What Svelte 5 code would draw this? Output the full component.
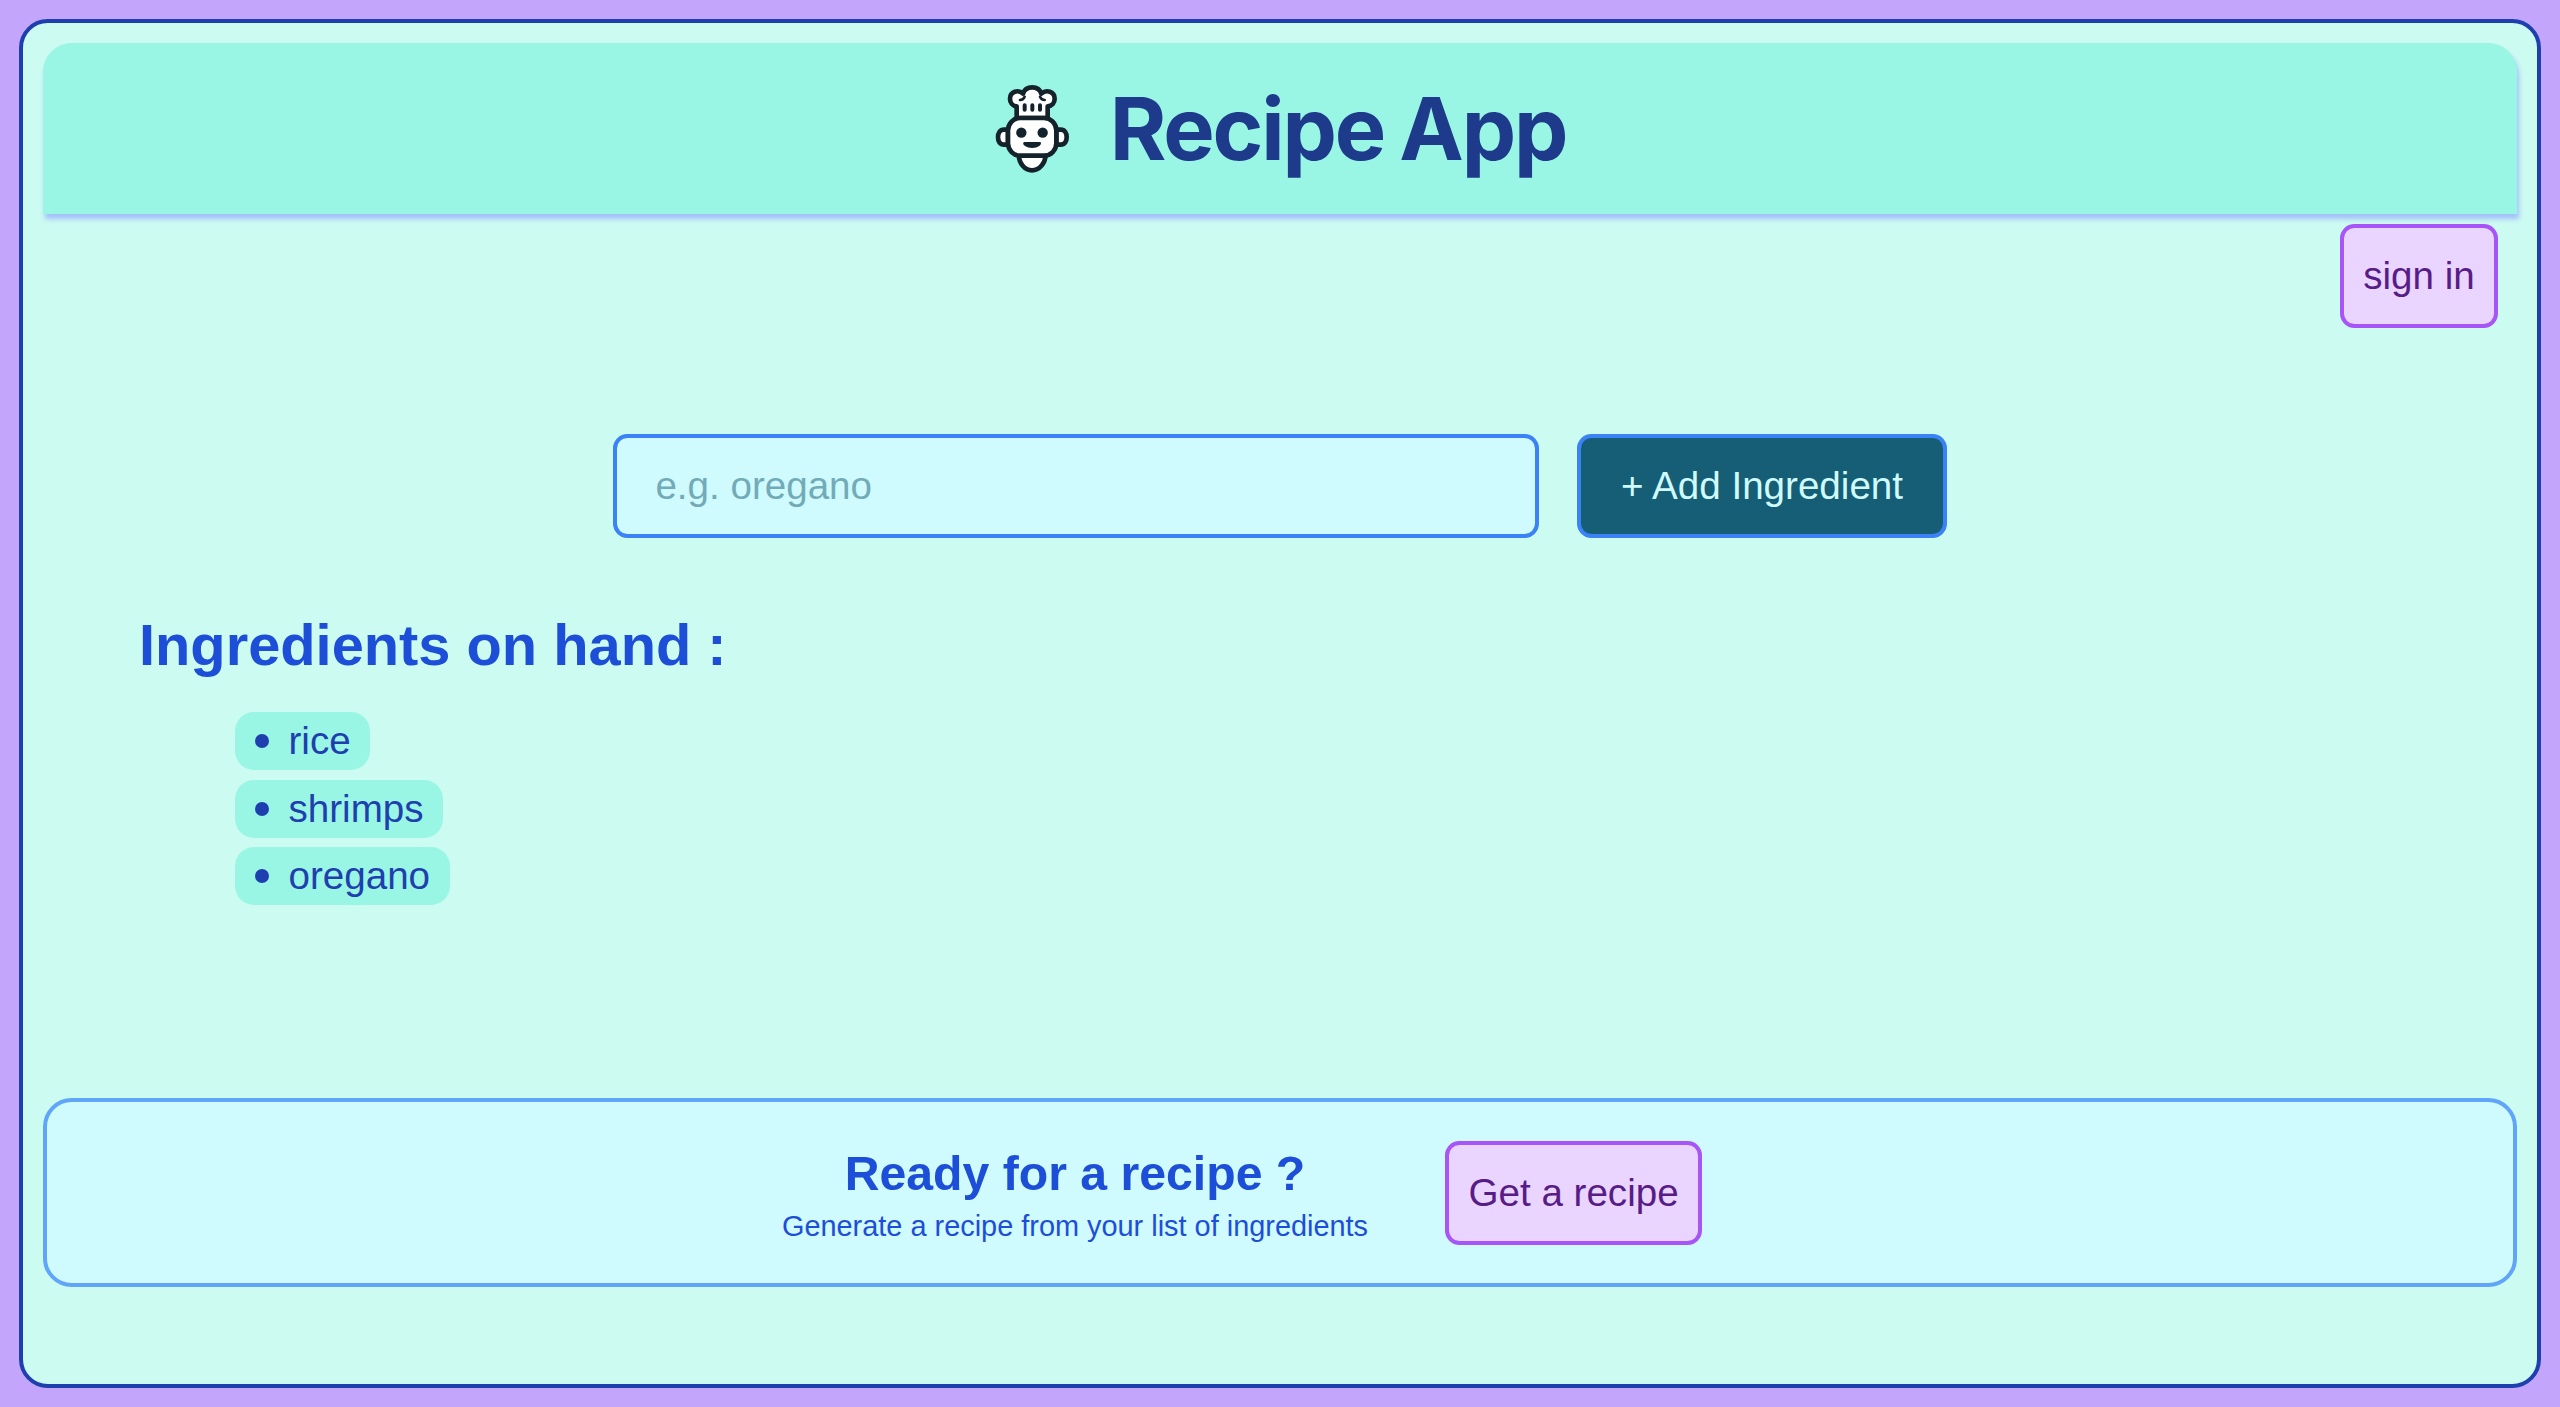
<script>
  const ingredients = ['rice', 'shrimps', 'oregano'];
</script>

<main class="app">
  <header>
    <svg class="logo" viewBox="0 0 330 345" fill="#fff" stroke="#14222b" stroke-width="14" stroke-linejoin="round" stroke-linecap="round">
      <path d="M116 251C117 277 134 298 156 298C178 298 196 277 197 251Z" />
      <path d="M84 176H72C60 176 54 186 54 199C54 212 60 221 72 221H84ZM229 176H242C254 176 260 186 260 199C260 212 254 221 242 221H229Z" />
      <path d="M110 141V106C97 105 90 95 90 83C90 62 115 54 129 68C137 43 176 43 184 68C199 54 224 62 224 83C224 95 216 105 203 106V141Z" />
      <rect x="84" y="141" width="145" height="113" rx="37" />
      <path d="M134 103V116M157 103V116M180 103V116" stroke-width="12" />
      <path d="M120 87C127 87 132 83 134 77M194 87C187 87 182 83 180 77" fill="none" stroke-width="8" />
      <g fill="#14222b" stroke="none">
        <circle cx="124" cy="185" r="15.5" />
        <circle cx="188" cy="185" r="15.5" />
        <path d="M134 213H179C185 213 184 220 178 225C167 233 146 233 135 225C128 220 128 213 134 213Z" />
      </g>
    </svg>
    <h1>Recipe App</h1>
  </header>

  <nav><button class="purple">sign in</button></nav>

  <form onsubmit={(e) => e.preventDefault()}>
    <input type="text" placeholder="e.g. oregano" aria-label="Ingredient" />
    <button class="add">+ Add Ingredient</button>
  </form>

  <section class="list">
    <h2>Ingredients on hand :</h2>
    <ul>
      {#each ingredients as item}
        <li><span class="dot"></span>{item}</li>
      {/each}
    </ul>
  </section>

  <section class="ready">
    <div class="copy">
      <h3>Ready for a recipe ?</h3>
      <p>Generate a recipe from your list of ingredients</p>
    </div>
    <button class="purple">Get a recipe</button>
  </section>
</main>

<style>
  :global(body) {
    margin: 0;
    background: #c4a5fc;
  }
  .app, .app * { box-sizing: border-box; }
  .app {
    display: flex;
    flex-direction: column;
    height: 1369px;
    margin: 19px;
    padding: 20px;
    border: 4px solid #1e40af;
    border-radius: 28.8px;
    background: #ccfbf1;
    font-family: "Liberation Sans", Arial, sans-serif;
    font-size: 38.6px;
    line-height: 58px;
  }
  h1, h2, h3, p, ul { margin: 0; padding: 0; }
  button, input {
    height: 104px;
    margin: 0;
    border: 4px solid #3b82f6;
    border-radius: 14.4px;
    font: inherit;
    white-space: nowrap;
  }
  header {
    display: flex;
    flex: none;
    align-items: center;
    justify-content: center;
    gap: 20px;
    height: 171px;
    padding-right: 14px;
    border-radius: 28.8px 28.8px 0 0;
    background: #99f6e4;
    box-shadow: 2px 5px 5px #a3bffa;
  }
  .logo { width: 110px; height: 115px; }
  h1 {
    color: #1e3a8a;
    font: 700 86.4px/96px Inter, sans-serif;
    letter-spacing: -0.025em;
    word-spacing: -3px;
  }
  nav {
    display: flex;
    justify-content: flex-end;
    padding: 10px 19px 0 0;
  }
  .purple {
    padding: 0;
    border-color: #a855f7;
    background: #e9d5ff;
    color: #581c87;
  }
  nav .purple { width: 158px; }
  form {
    display: flex;
    justify-content: center;
    gap: 38px;
    margin-top: 106px;
  }
  input {
    width: 926px;
    padding: 0 38.4px;
    background: #cffafe;
    color: #155e75;
  }
  input::placeholder { color: #155e75; opacity: 0.5; }
  .add {
    width: 370px;
    padding: 0;
    background: #155e75;
    color: #cffafe;
  }
  .list { padding: 68px 0 0 96px; }
  h2 {
    color: #1d4ed8;
    font-size: 57.8px;
    line-height: 78px;
  }
  ul {
    display: flex;
    flex-direction: column;
    align-items: flex-start;
    gap: 9.6px;
    padding: 28px 0 0 96px;
    list-style: none;
  }
  li {
    display: flex;
    align-items: center;
    gap: 20px;
    height: 58px;
    padding: 0 19.5px;
    border-radius: 19.2px;
    background: #99f6e4;
    color: #1e40af;
  }
  .dot {
    width: 14px;
    height: 14px;
    border-radius: 50%;
    background: #1e40af;
  }
  .ready {
    display: flex;
    align-items: center;
    justify-content: center;
    gap: 77px;
    height: 189px;
    margin: auto 0 77px;
    padding-right: 76px;
    border: 4px solid #60a5fa;
    border-radius: 28.8px;
    background: #cffafe;
  }
  .copy { color: #1d4ed8; text-align: center; }
  h3 { font-size: 48.2px; line-height: 67px; }
  p { font-size: 28.9px; line-height: 38.4px; }
  .ready .purple { width: 257px; }
</style>
